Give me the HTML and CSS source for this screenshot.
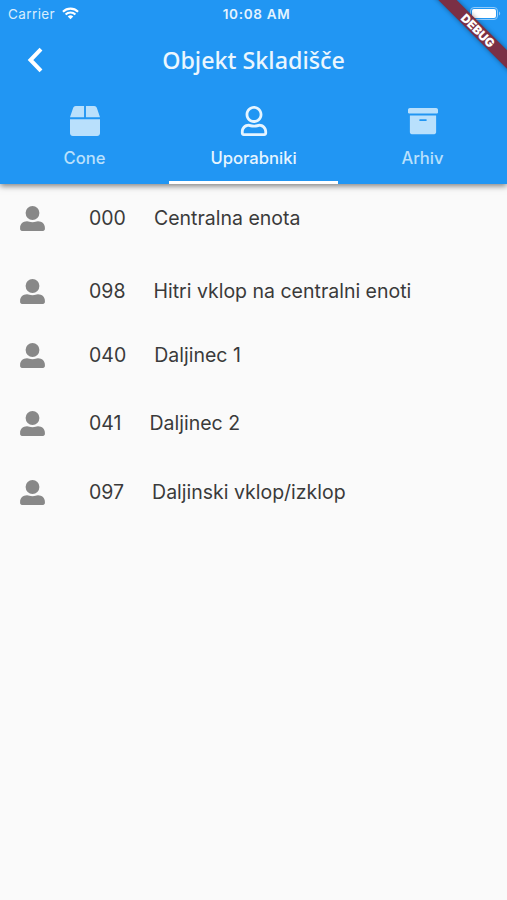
FILE: index.html
```html
<!DOCTYPE html>
<html lang="sl">
<head>
    <meta charset="UTF-8">
    <meta name="viewport" content="width=device-width, initial-scale=1.0">
    <title>Objekt Skladišče</title>
    <link rel="stylesheet" href="styles.css">
</head>
<body>

    <div class="header">
        <div class="status-bar">
            <div class="carrier">
                <span>Carrier</span>
                <svg class="wifi" viewBox="0 0 18 13">
                    <path d="M1 4.6a11.5 11.5 0 0 1 16 0M3.8 7.6a7.5 7.5 0 0 1 10.4 0" fill="none" stroke="#fff" stroke-width="2.2"/>
                    <path d="M9 12.6 6.1 9.7a4.2 4.2 0 0 1 5.8 0z" fill="#fff"/>
                </svg>
            </div>
            <span class="time">10:08 AM</span>
            <svg class="battery" viewBox="0 0 31 13">
                <rect x="0.5" y="0.5" width="27" height="12" rx="3.5" fill="none" stroke="#8fcafa"/>
                <rect x="2" y="2" width="24" height="9" rx="2" fill="#fff"/>
                <path d="M29 4.5c1.6.6 1.6 3.4 0 4z" fill="#8fcafa"/>
            </svg>
        </div>

        <div class="title-bar">
            <a class="back" href="#">
                <svg viewBox="0 0 18 26"><path d="M15 2.200 4.500 13 15 23.800" fill="none" stroke="#fff" stroke-width="4"/></svg>
            </a>
            <h1>Objekt Skladišče</h1>
        </div>

        <div class="tabs">
            <a class="tab" href="#">
                <svg viewBox="0 0 512 512"><path d="M509.5 184.6L458.9 32.8C452.4 13.2 434.1 0 413.4 0H272v192h238.7c-.4-2.5-.4-5-1.2-7.4zM240 0H98.6c-20.7 0-39 13.2-45.5 32.8L2.5 184.6c-.8 2.4-.8 4.9-1.2 7.4H240V0zM0 224v240c0 26.5 21.5 48 48 48h416c26.5 0 48-21.5 48-48V224H0z"/></svg>
                <span>Cone</span>
            </a>
            <a class="tab active" href="#">
                <svg viewBox="0 0 448 512"><path d="M313.6 304c-28.7 0-42.5 16-89.6 16-47.1 0-60.8-16-89.6-16C60.2 304 0 364.2 0 438.4V464c0 26.5 21.5 48 48 48h352c26.5 0 48-21.5 48-48v-25.6c0-74.2-60.2-134.4-134.4-134.4zM400 464H48v-25.6c0-47.6 38.8-86.4 86.4-86.4 14.6 0 38.3 16 89.6 16 51.7 0 74.9-16 89.6-16 47.6 0 86.4 38.8 86.4 86.4V464zM224 288c79.5 0 144-64.5 144-144S303.5 0 224 0 80 64.5 80 144s64.5 144 144 144zm0-240c52.9 0 96 43.1 96 96s-43.1 96-96 96-96-43.1-96-96 43.1-96 96-96z"/></svg>
                <span>Uporabniki</span>
            </a>
            <a class="tab" href="#">
                <svg viewBox="0 0 512 512"><path d="M32 448c0 17.7 14.3 32 32 32h384c17.7 0 32-14.3 32-32V160H32v288zm160-212c0-6.6 5.4-12 12-12h104c6.6 0 12 5.4 12 12v8c0 6.6-5.4 12-12 12H204c-6.6 0-12-5.4-12-12v-8zM480 32H32C14.3 32 0 46.3 0 64v48c0 8.8 7.2 16 16 16h480c8.8 0 16-7.2 16-16V64c0-17.7-14.3-32-32-32z"/></svg>
                <span>Arhiv</span>
            </a>
        </div>
    </div>

    <div class="debug"><span>DEBUG</span></div>

    <svg class="defs">
        <symbol id="user" viewBox="0 0 25 25">
            <circle cx="12.5" cy="7" r="6.9"/>
            <path d="M7 15.3c2 0 2.7.9 5.5.9s3.5-.9 5.5-.9c4 0 6.9 2.8 6.9 6.4v1.3c0 1.1-.8 1.9-1.9 1.9H2c-1.1 0-1.900-.8-1.900-1.900v-1.300c0-3.600 2.900-6.400 6.900-6.400z"/>
        </symbol>
    </svg>

    <ul class="users">
        <li><svg><use href="#user"/></svg><span class="code">000</span><span class="name">Centralna enota</span></li>
        <li class="low"><svg><use href="#user"/></svg><span class="code">098</span><span class="name">Hitri vklop na centralni enoti</span></li>
        <li class="high"><svg><use href="#user"/></svg><span class="code">040</span><span class="name">Daljinec 1</span></li>
        <li><svg><use href="#user"/></svg><span class="code">041</span><span class="name">Daljinec 2</span></li>
        <li><svg><use href="#user"/></svg><span class="code">097</span><span class="name">Daljinski vklop/izklop</span></li>
    </ul>

</body>
</html>
```
FILE: styles.css
```css
* {
    box-sizing: border-box;
}

body {
    margin: 0;
    height: 100vh;
    overflow: hidden;
    background-color: #fafafa;
    font-family: Inter, sans-serif;
    color: #3a3a3a;
}

a {
    color: white;
    text-decoration: none;
}

/* Header */
.header {
    height: 184px;
    background-color: #2196f3;
    color: white;
    box-shadow: 0 2px 6px rgba(0, 0, 0, 0.5);
}

.status-bar {
    display: grid;
    grid-template-columns: 1fr auto 1fr;
    align-items: center;
    height: 27px;
    padding: 0 6px 0 8px;
    font-size: 13.5px;
}

.carrier {
    display: flex;
    align-items: center;
    gap: 7px;
    letter-spacing: 0.4px;
    color: #d8edfd;
}

.wifi {
    width: 17px;
    height: 13px;
}

.time {
    padding-left: 4px;
    font-weight: 600;
    letter-spacing: 0.7px;
    color: #e4f3fe;
}

.battery {
    justify-self: end;
    width: 31px;
    height: 13px;
    margin-bottom: 1px;
}

.title-bar {
    display: grid;
    grid-template-columns: 70px 1fr 70px;
    align-items: center;
    height: 65px;
}

.back {
    display: flex;
    justify-content: center;
}

.back svg {
    width: 18px;
    height: 26px;
}

h1 {
    margin: 0;
    text-align: center;
    font-family: "Noto Sans", sans-serif;
    font-size: 23.3px;
    font-weight: 500;
    color: #ebf6fe;
}

/* Tabs */
.tabs {
    display: flex;
    height: 92px;
}

.tab {
    flex: 1;
    display: flex;
    flex-direction: column;
    align-items: center;
    padding-top: 14px;
    border-bottom: 3px solid transparent;
    font-size: 16.6px;
    font-weight: 500;
    color: #b9e0fc;
}

.tab svg {
    width: 30px;
    height: 30px;
    margin-bottom: 12px;
    fill: currentColor;
}

.tab.active {
    border-bottom-color: white;
    color: #e6f5ff;
}

/* Corner ribbon */
.debug {
    position: absolute;
    top: 0;
    right: 0;
    width: 80px;
    height: 80px;
    overflow: hidden;
}

.debug span {
    position: absolute;
    top: 24px;
    left: -9px;
    width: 120px;
    height: 13px;
    background-color: #7b3045;
    box-shadow: 0 0 5px rgba(0, 0, 0, 0.4);
    color: white;
    font-size: 12px;
    font-weight: 900;
    line-height: 13px;
    text-align: center;
    transform: rotate(45deg);
}

.defs {
    display: none;
}

/* User list */
.users {
    list-style: none;
    margin: 0;
    padding: 0 20px;
}

.users li {
    display: flex;
    align-items: center;
    height: 68.4px;
    font-size: 19.5px;
}

.users .low {
    margin-top: 4px;
}

.users .high {
    margin-top: -4px;
}

.users svg {
    width: 25px;
    height: 25px;
    margin: 1px 44px 0 0;
    fill: #888;
}

.code {
    margin-right: 28px;
}
```
